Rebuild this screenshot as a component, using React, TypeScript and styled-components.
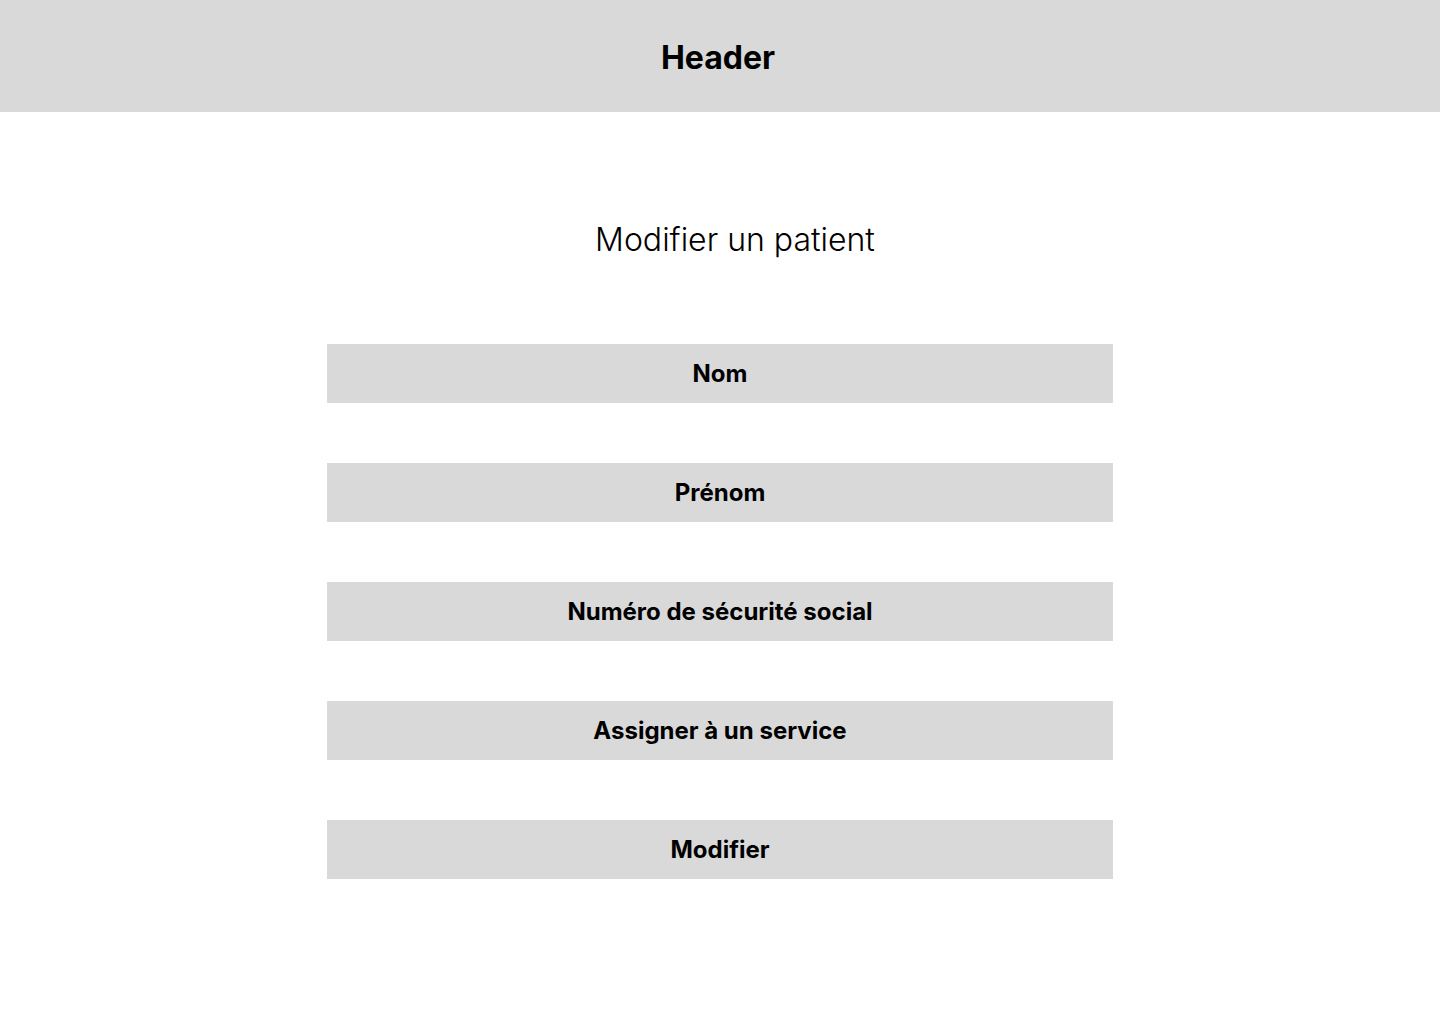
import styled, { createGlobalStyle } from 'styled-components';

const GlobalStyle = createGlobalStyle`
  body {
    margin: 0;
    background: #ffffff;
    font-family: Inter, "Noto Sans", sans-serif;
    color: #000000;
  }
`;

const Page = styled.div`
  min-height: 1024px;
  display: flex;
  flex-direction: column;
`;

const Header = styled.header`
  height: 112px;
  background: #d9d9d9;
  display: flex;
  align-items: center;
  justify-content: center;

  h1 {
    margin: 0;
    padding-top: 3px;
    font-size: 32px;
    font-weight: 700;
    line-height: 1;
    transform: translateX(-2px);
  }
`;

const Main = styled.main`
  display: flex;
  flex-direction: column;
  align-items: center;
  padding-top: 108px;
`;

const Title = styled.h2`
  margin: 0 0 84px 30px;
  font-size: 32px;
  font-weight: 300;
  line-height: 40px;
`;

const Form = styled.form`
  display: flex;
  flex-direction: column;
  gap: 60px;
  width: 786px;
`;

const Field = styled.div<{ $button?: boolean }>`
  height: 59px;
  background: #d9d9d9;
  display: flex;
  align-items: center;
  justify-content: center;
  font-size: 24px;
  font-weight: 700;
  cursor: ${({ $button }) => ($button ? 'pointer' : 'text')};
`;

const fields = ['Nom', 'Prénom', 'Numéro de sécurité social', 'Assigner à un service'];

export default function App() {
  return (
    <Page>
      <GlobalStyle />
      <Header>
        <h1>Header</h1>
      </Header>
      <Main>
        <Title>Modifier un patient</Title>
        <Form>
          {fields.map((f) => (
            <Field key={f}>{f}</Field>
          ))}
          <Field $button>Modifier</Field>
        </Form>
      </Main>
    </Page>
  );
}
